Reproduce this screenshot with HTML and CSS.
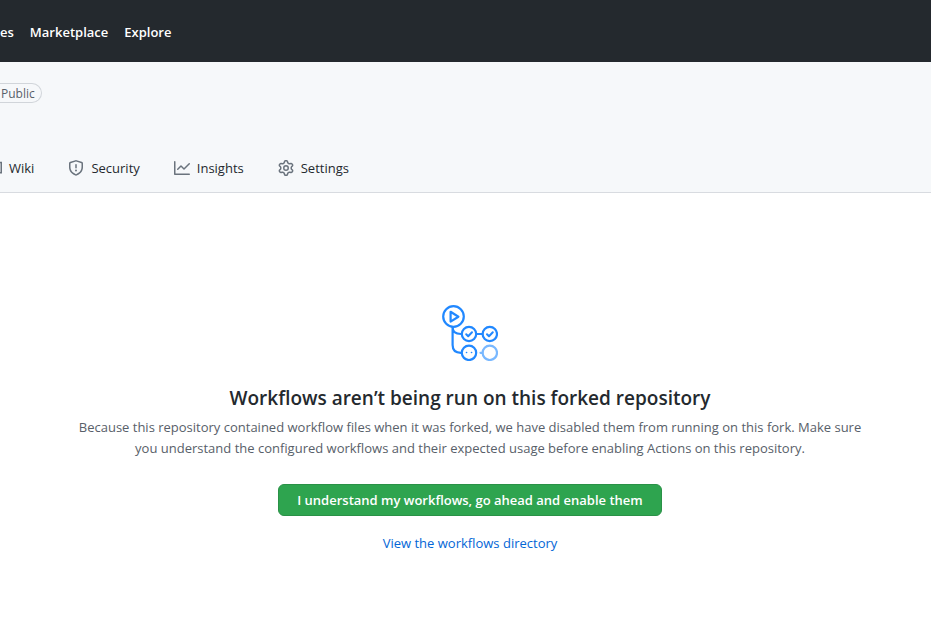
FILE: index.html
```
<!DOCTYPE html>
<html lang="en">
<head>
    <meta charset="UTF-8">
    <meta name="viewport" content="width=device-width, initial-scale=1.0">
    <title>Actions</title>
    <link rel="stylesheet" href="styles.css">
</head>
<body>

    <header class="header">
        <nav class="header-nav">
            <a href="#">es</a>
            <a href="#">Marketplace</a>
            <a href="#">Explore</a>
        </nav>
    </header>

    <div class="repo-head">
        <div class="repo-title">
            <span class="label">Public</span>
        </div>

        <nav class="tabs">
            <a href="#" class="tab tab-first">
                <svg width="2" height="16" viewBox="14 0 2 16"><path d="M8.75 2.5h6.5v10.25h-6.5" fill="none" stroke="currentColor" stroke-width="1.5"/></svg>
                <span>Wiki</span>
            </a>
            <a href="#" class="tab">
                <svg width="16" height="16" viewBox="0 0 16 16" fill="currentColor"><path fill-rule="evenodd" d="M7.467.133a1.75 1.75 0 011.066 0l5.25 1.68A1.75 1.75 0 0115 3.48V7c0 1.566-.32 3.182-1.303 4.682-.983 1.498-2.585 2.813-5.032 3.855a1.7 1.7 0 01-1.33 0c-2.447-1.042-4.049-2.357-5.032-3.855C1.32 10.182 1 8.566 1 7V3.48a1.75 1.75 0 011.217-1.667l5.25-1.68zm.61 1.429a.25.25 0 00-.153 0l-5.25 1.68a.25.25 0 00-.174.238V7c0 1.358.275 2.666 1.057 3.86.784 1.194 2.121 2.34 4.366 3.297a.2.2 0 00.154 0c2.245-.956 3.582-2.104 4.366-3.298C13.225 9.666 13.5 8.36 13.5 7V3.48a.25.25 0 00-.174-.237l-5.25-1.68zM9 10.5a1 1 0 11-2 0 1 1 0 012 0zm-.25-5.75a.75.75 0 10-1.5 0v3a.75.75 0 001.5 0v-3z"/></svg>
                <span>Security</span>
            </a>
            <a href="#" class="tab">
                <svg width="16" height="16" viewBox="0 0 16 16" fill="currentColor"><path fill-rule="evenodd" d="M1.5 1.75a.75.75 0 00-1.5 0v12.5c0 .414.336.75.75.75h14.5a.75.75 0 000-1.5H1.5V1.75zm14.28 2.53a.75.75 0 00-1.06-1.06L10 7.94 7.53 5.47a.75.75 0 00-1.06 0L3.22 8.72a.75.75 0 001.06 1.06L7 7.06l2.47 2.47a.75.75 0 001.06 0l5.25-5.25z"/></svg>
                <span>Insights</span>
            </a>
            <a href="#" class="tab">
                <svg width="16" height="16" viewBox="0 0 16 16" fill="currentColor"><path fill-rule="evenodd" d="M7.429 1.525a6.593 6.593 0 011.142 0c.036.003.108.036.137.146l.289 1.105c.147.56.55.967.997 1.189.174.086.341.183.501.29.417.278.97.423 1.53.27l1.102-.303c.11-.03.175.016.195.046.219.31.41.641.573.989.014.031.022.11-.059.19l-.815.806c-.411.406-.562.957-.53 1.456a4.588 4.588 0 010 .582c-.032.499.119 1.05.53 1.456l.815.806c.08.08.073.159.059.19a6.494 6.494 0 01-.573.99c-.02.029-.086.074-.195.045l-1.103-.303c-.559-.153-1.112-.008-1.529.27-.16.107-.327.204-.5.29-.449.222-.851.628-.998 1.189l-.289 1.105c-.029.11-.101.143-.137.146a6.613 6.613 0 01-1.142 0c-.036-.003-.108-.037-.137-.146l-.289-1.105c-.147-.56-.55-.967-.997-1.189a4.502 4.502 0 01-.501-.29c-.417-.278-.97-.423-1.53-.27l-1.102.303c-.11.03-.175-.016-.195-.046a6.492 6.492 0 01-.573-.989c-.014-.031-.022-.11.059-.19l.815-.806c.411-.406.562-.957.53-1.456a4.587 4.587 0 010-.582c.032-.499-.119-1.05-.53-1.456l-.815-.806c-.08-.08-.073-.159-.059-.19a6.44 6.44 0 01.573-.99c.02-.029.086-.075.195-.045l1.103.303c.559.153 1.112.008 1.529-.27.16-.107.327-.204.5-.29.449-.222.851-.628.998-1.189l.289-1.105c.029-.11.101-.143.137-.146zM8 0c-.236 0-.47.01-.701.03-.743.065-1.29.615-1.458 1.261l-.29 1.106c-.017.066-.078.158-.211.224a5.994 5.994 0 00-.668.386c-.123.082-.233.09-.3.071L3.27 2.776c-.644-.177-1.392.02-1.82.63a7.977 7.977 0 00-.704 1.217c-.315.675-.111 1.422.363 1.891l.815.806c.05.048.098.147.088.294a6.084 6.084 0 000 .772c.01.147-.038.246-.088.294l-.815.806c-.474.469-.678 1.216-.363 1.891.2.428.436.835.704 1.218.428.609 1.176.806 1.82.63l1.103-.303c.066-.019.176-.011.299.071.213.143.436.272.668.386.133.066.194.158.212.224l.289 1.106c.169.646.715 1.196 1.458 1.26a8.094 8.094 0 001.402 0c.743-.064 1.29-.614 1.458-1.26l.29-1.106c.017-.066.078-.158.211-.224a5.98 5.98 0 00.668-.386c.123-.082.233-.09.3-.071l1.102.302c.644.177 1.392-.02 1.82-.63.268-.382.505-.789.704-1.217.315-.675.111-1.422-.364-1.891l-.814-.806c-.05-.048-.098-.147-.088-.294a6.1 6.1 0 000-.772c-.01-.147.039-.246.088-.294l.814-.806c.475-.469.679-1.216.364-1.891a7.992 7.992 0 00-.704-1.218c-.428-.609-1.176-.806-1.82-.63l-1.103.303c-.066.019-.176.011-.299-.071a5.991 5.991 0 00-.668-.386c-.133-.066-.194-.158-.212-.224L10.16 1.29C9.99.645 9.444.095 8.701.031A8.094 8.094 0 008 0zm1.5 8a1.5 1.5 0 11-3 0 1.5 1.5 0 013 0zM11 8a3 3 0 11-6 0 3 3 0 016 0z"/></svg>
                <span>Settings</span>
            </a>
        </nav>
    </div>

    <main class="blankslate">
        <!-- actions logo -->
        <svg width="56" height="56" viewBox="0 0 56 56" fill="none" stroke="#2188ff" stroke-width="2.2" stroke-linecap="round" stroke-linejoin="round">
            <circle cx="11.5" cy="11.5" r="10.3"/>
            <path d="M8.6 6.8v9.8l7.8-4.9z"/>
            <path d="M10.6 22v18c0 5 3 7.8 8.4 7.8M10.6 22c0 4.5 3 7 8.4 7M34.5 29h6"/>
            <circle cx="27" cy="29" r="7.2"/>
            <circle cx="47.8" cy="29" r="7.2"/>
            <path d="M24.2 29.2l2 2 3.8-4M45 29.2l2 2 3.8-4" stroke-width="2"/>
            <circle cx="27" cy="47.8" r="7.2"/>
            <path d="M24.5 47.5h.1M29.5 47.5h.1" stroke-width="1.6"/>
            <g stroke="#79b8ff">
                <circle cx="47.8" cy="47.8" r="7.2"/>
                <path d="M38.5 47.8h2"/>
            </g>
        </svg>

        <h1>Workflows aren’t being run on this forked repository</h1>
        <p>Because this repository contained workflow files when it was forked, we have disabled them from running on this fork. Make sure you understand the configured workflows and their expected usage before enabling Actions on this repository.</p>
        <button type="button" class="btn">I understand my workflows, go ahead and enable them</button>
        <a href="#" class="link">View the workflows directory</a>
    </main>

</body>
</html>
```

FILE: styles.css
```
*{
    box-sizing: border-box;
}

body{
    margin: 0;
    font-family: "Open Sans", "Noto Sans", sans-serif;
    font-size: 13px;
    line-height: 21px;
    color: #24292e;
    background: #fff;
}

a{
    text-decoration: none;
}

/* top bar */
.header{
    padding: 22px 0 19px;
    background: #24292e;
}

.header-nav{
    display: flex;
    gap: 16px;
}

.header-nav a{
    color: #fff;
    font-weight: 600;
}

/* repository head */
.repo-head{
    padding-top: 21px;
    background: #f6f8fa;
    border-bottom: 1px solid #d8dbe0;
}

.repo-title{
    display: flex;
}

.label{
    padding: 1px 6px 0 1px;
    border: 1px solid #d1d5da;
    border-left: 0;
    border-radius: 0 10px 10px 0;
    font-size: 12px;
    font-weight: 500;
    line-height: 17px;
    color: #586069;
}

.tabs{
    display: flex;
    margin-top: 41px;
}

.tab{
    display: flex;
    align-items: center;
    gap: 7px;
    padding: 13px 17px;
    line-height: 22px;
    color: #24292e;
}

.tab-first{
    padding-left: 0;
}

.tab svg{
    color: #6a737d;
}

/* message */
.blankslate{
    display: flex;
    flex-direction: column;
    align-items: center;
    padding: 112px 32px 32px 41px;
    text-align: center;
}

.blankslate h1{
    margin: 22px 0 4px;
    font-size: 19px;
    font-weight: 600;
    line-height: 30px;
}

.blankslate p{
    max-width: 796px;
    margin: 0 0 25px;
    color: #586069;
}

.btn{
    padding: 5px 18px;
    border: 1px solid #2a9147;
    border-radius: 6px;
    background: #2ea44f;
    color: #fff;
    font-family: inherit;
    font-size: 13px;
    font-weight: 600;
    line-height: 20px;
    cursor: pointer;
}

.link{
    margin-top: 17px;
    color: #0366d6;
}
```
